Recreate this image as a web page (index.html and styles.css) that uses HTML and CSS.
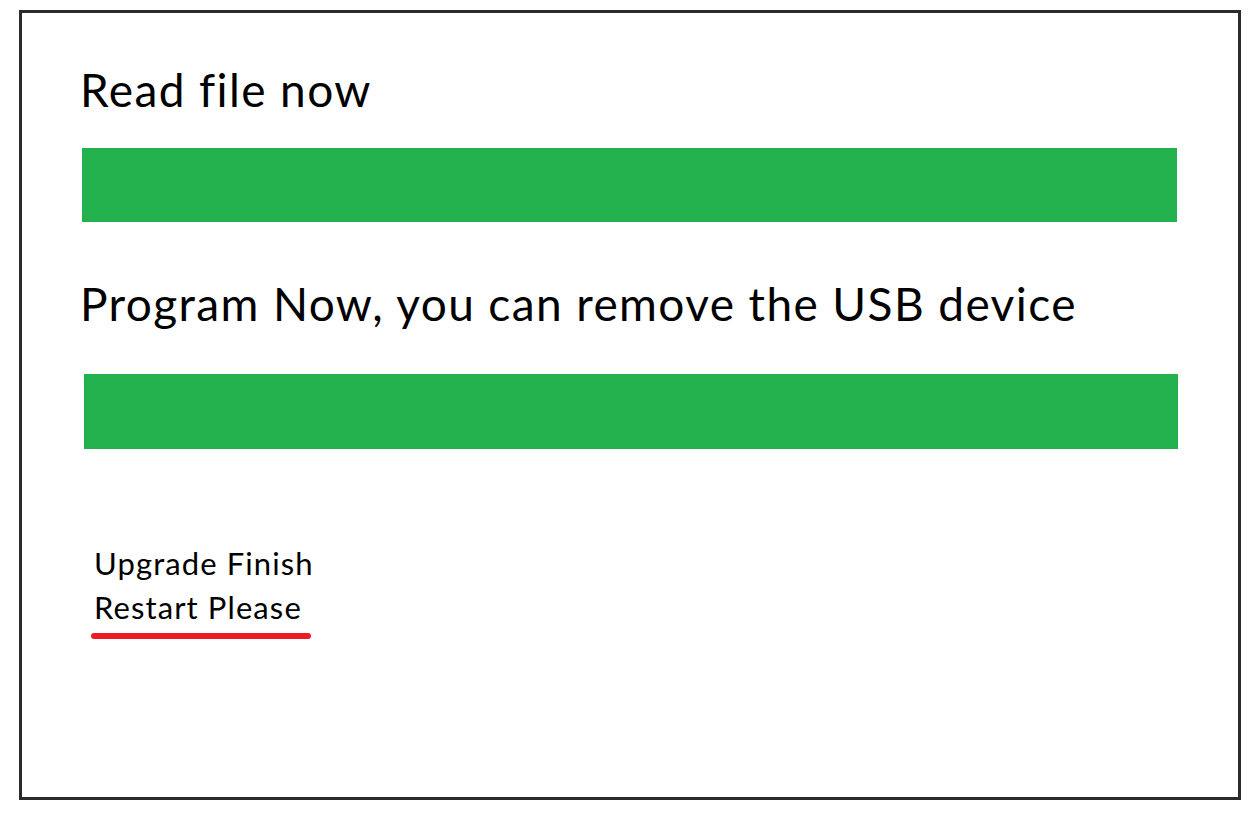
FILE: index.html
```html
<!DOCTYPE html>
<html lang="en">
<head>
  <meta charset="UTF-8">
  <title>Upgrade</title>
  <link rel="stylesheet" href="styles.css">
</head>
<body>

  <div class="frame">
    <h1 class="step-title">Read file now</h1>
    <div class="bar bar-read"></div>

    <h1 class="step-title step-program">Program Now, you can remove the USB device</h1>
    <div class="bar bar-program"></div>

    <div class="status">
      <p>Upgrade Finish</p>
      <p>Restart Please</p>
      <div class="mark"></div>
    </div>
  </div>

</body>
</html>
```

FILE: styles.css
```css
body {
  margin: 0;
  padding: 0;
  background: white;
  color: black;
  font-family: Lato, "Open Sans", sans-serif;
}

.frame {
  margin: 10px 0 0 19px;
  width: 1216px;
  height: 784px;
  border: 3px solid #2b2b2b;
}

.step-title {
  margin: 54px 0 0 58px;
  font-size: 46px;
  font-weight: normal;
  line-height: 46px;
  letter-spacing: 1.4px;
}

.step-program {
  margin-top: 59px;
}

.bar {
  height: 74px;
  background: #22b14c;
}

.bar-read {
  margin: 35px 0 0 60px;
  width: 1095px;
}

.bar-program {
  margin: 47px 0 0 62px;
  width: 1094px;
  height: 75px;
}

.status {
  margin: 92px 0 0 72px;
  font-size: 31px;
  line-height: 44px;
  letter-spacing: 1.1px;
}

.status p {
  margin: 0;
}

.mark {
  width: 220px;
  height: 6px;
  margin: 4px 0 0 -3px;
  border-radius: 3px;
  background: #ed1c24;
}
```
